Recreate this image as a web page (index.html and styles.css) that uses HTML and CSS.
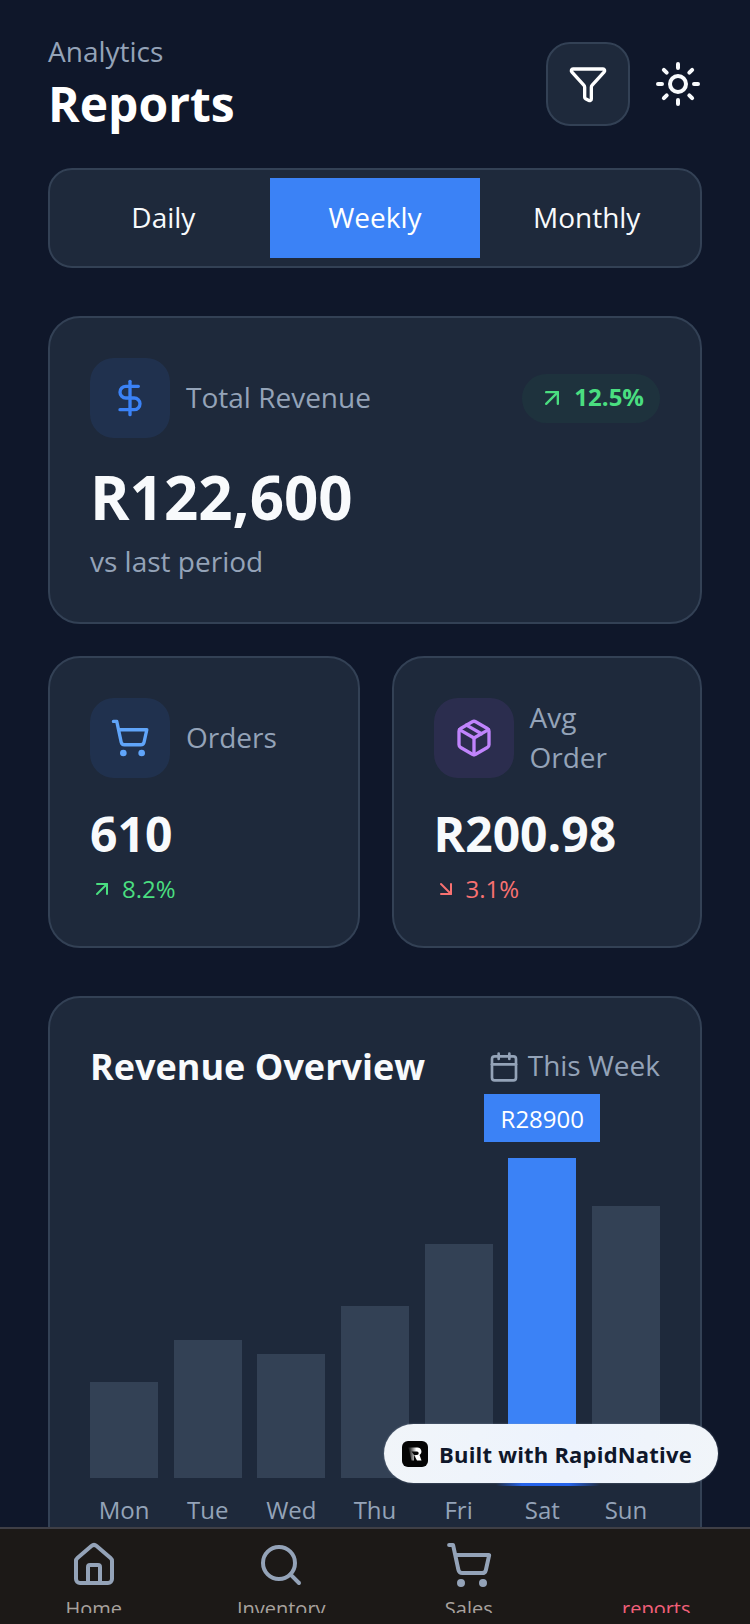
FILE: index.html
```html
<!DOCTYPE html>
<html lang="en">
<head>
<meta charset="utf-8">
<title>Reports</title>
<link rel="stylesheet" href="styles.css">
</head>
<body>
<div class="screen">
  <main class="content">
    <header class="header">
      <div class="titles">
        <div class="eyebrow">Analytics</div>
        <h1 class="title">Reports</h1>
      </div>
      <div class="actions">
        <button class="filter-btn">
          <svg class="ic ic-40" viewBox="0 0 24 24"><path d="M10 20a1 1 0 0 0 .553.895l2 1A1 1 0 0 0 14 21v-7a2 2 0 0 1 .517-1.341L21.74 4.67A1 1 0 0 0 21 3H3a1 1 0 0 0-.742 1.67l7.225 7.989A2 2 0 0 1 10 14z"/></svg>
        </button>
        <svg class="ic ic-48" viewBox="0 0 24 24"><circle cx="12" cy="12" r="4"/><path d="M12 2v2M12 20v2M4.93 4.93l1.41 1.41M17.66 17.66l1.41 1.41M2 12h2M20 12h2M6.34 17.66l-1.41 1.41M19.07 4.93l-1.41 1.41"/></svg>
      </div>
    </header>

    <div class="segments">
      <div class="segment">Daily</div>
      <div class="segment segment-active">Weekly</div>
      <div class="segment">Monthly</div>
    </div>

    <section class="card card-revenue">
      <div class="card-top">
        <div class="label-row">
          <div class="icon-box box-blue">
            <svg class="ic ic-40 blue" viewBox="0 0 24 24"><path d="M12 2v20"/><path d="M17 5H9.500a3.500 3.500 0 0 0 0 7h5a3.500 3.500 0 0 1 0 7H6"/></svg>
          </div>
          <div class="label">Total Revenue</div>
        </div>
        <div class="pill">
          <svg class="ic ic-28 green" viewBox="0 0 24 24"><path d="M7 7h10v10"/><path d="M7 17 17 7"/></svg>
          <span>12.5%</span>
        </div>
      </div>
      <div class="big-value">R122,600</div>
      <div class="sub">vs last period</div>
    </section>

    <div class="stats">
      <section class="card stat">
        <div class="label-row">
          <div class="icon-box box-blue2">
            <svg class="ic ic-40 sky" viewBox="0 0 24 24"><circle cx="8" cy="21" r="1"/><circle cx="19" cy="21" r="1"/><path d="M2.05 2.05h2l2.66 12.42a2 2 0 0 0 2 1.58h9.78a2 2 0 0 0 1.95-1.57l1.65-7.43H5.12"/></svg>
          </div>
          <div class="label">Orders</div>
        </div>
        <div class="mid-value">610</div>
        <div class="delta up">
          <svg class="ic ic-24" viewBox="0 0 24 24"><path d="M7 7h10v10"/><path d="M7 17 17 7"/></svg>
          <span>8.2%</span>
        </div>
      </section>
      <section class="card stat">
        <div class="label-row">
          <div class="icon-box box-purple">
            <svg class="ic ic-40 purple" viewBox="0 0 24 24"><path d="m7.500 4.270 9 5.150"/><path d="M21 8a2 2 0 0 0-1-1.730l-7-4a2 2 0 0 0-2 0l-7 4A2 2 0 0 0 3 8v8a2 2 0 0 0 1 1.730l7 4a2 2 0 0 0 2 0l7-4A2 2 0 0 0 21 16Z"/><path d="m3.300 7 8.700 5 8.700-5"/><path d="M12 22V12"/></svg>
          </div>
          <div class="label label-narrow">Avg Order</div>
        </div>
        <div class="mid-value">R200.98</div>
        <div class="delta down">
          <svg class="ic ic-24" viewBox="0 0 24 24"><path d="m7 7 10 10"/><path d="M17 7v10H7"/></svg>
          <span>3.1%</span>
        </div>
      </section>
    </div>

    <section class="card chart-card">
      <div class="chart-head">
        <h2 class="chart-title">Revenue Overview</h2>
        <div class="range">
          <svg class="ic ic-32" viewBox="0 0 24 24"><path d="M8 2v4"/><path d="M16 2v4"/><rect x="3" y="4" width="18" height="18" rx="2"/><path d="M3 10h18"/></svg>
          <span>This Week</span>
        </div>
      </div>
      <div class="chart">
        <div class="col"><div class="bar" style="height:96px"></div><div class="day">Mon</div></div>
        <div class="col"><div class="bar" style="height:138px"></div><div class="day">Tue</div></div>
        <div class="col"><div class="bar" style="height:124px"></div><div class="day">Wed</div></div>
        <div class="col"><div class="bar" style="height:172px"></div><div class="day">Thu</div></div>
        <div class="col"><div class="bar" style="height:234px"></div><div class="day">Fri</div></div>
        <div class="col">
          <div class="bar bar-active" style="height:320px"><div class="tip">R28900</div></div>
          <div class="day">Sat</div>
        </div>
        <div class="col"><div class="bar" style="height:272px"></div><div class="day">Sun</div></div>
      </div>
    </section>
  </main>

  <nav class="nav">
    <div class="nav-item">
      <svg class="ic ic-48" viewBox="0 0 24 24"><path d="M15 21v-8a1 1 0 0 0-1-1h-4a1 1 0 0 0-1 1v8"/><path d="M3 10a2 2 0 0 1 .709-1.528l7-5.999a2 2 0 0 1 2.582 0l7 5.999A2 2 0 0 1 21 10v9a2 2 0 0 1-2 2H5a2 2 0 0 1-2-2z"/></svg>
      <div class="nav-label">Home</div>
    </div>
    <div class="nav-item">
      <svg class="ic ic-48" viewBox="0 0 24 24"><circle cx="11" cy="11" r="8"/><path d="m21 21-4.300-4.300"/></svg>
      <div class="nav-label">Inventory</div>
    </div>
    <div class="nav-item">
      <svg class="ic ic-48" viewBox="0 0 24 24"><circle cx="8" cy="21" r="1"/><circle cx="19" cy="21" r="1"/><path d="M2.05 2.05h2l2.66 12.42a2 2 0 0 0 2 1.58h9.78a2 2 0 0 0 1.95-1.57l1.65-7.43H5.12"/></svg>
      <div class="nav-label">Sales</div>
    </div>
    <div class="nav-item">
      <div class="nav-spacer"></div>
      <div class="nav-label nav-label-active">reports</div>
    </div>
  </nav>

  <div class="built">
    <svg class="built-logo" viewBox="0 0 26 26">
      <defs>
        <linearGradient id="rapid-fade" x1="0.1" y1="0" x2="0.6" y2="0">
          <stop offset="0" stop-color="#2a2a2a"/>
          <stop offset="1" stop-color="#ffffff"/>
        </linearGradient>
      </defs>
      <rect width="26" height="26" rx="6" fill="#050505"/>
      <path d="M6.500 6.500H15.500a4 4 0 0 1 2 7.400L19.500 19.500H15L12 14H15a1.600 1.600 0 0 0 0-3.400H9.500L12 14V19.500H9.500Z" fill="url(#rapid-fade)"/>
    </svg>
    <span>Built with RapidNative</span>
  </div>
</div>
</body>
</html>
```
FILE: styles.css
```css
* { box-sizing: border-box; }
html, body { margin: 0; padding: 0; }
body {
  width: 750px;
  height: 1624px;
  overflow: hidden;
  background: #0f172a;
  font-family: "Open Sans", "Noto Sans", sans-serif;
  color: #f8fafc;
}
.screen {
  position: relative;
  width: 750px;
  height: 1624px;
  display: flex;
  flex-direction: column;
  overflow: hidden;
}
.content {
  flex: 1;
  min-height: 0;
  overflow: hidden;
  padding: 32px 48px 0;
  display: flex;
  flex-direction: column;
}
.ic {
  fill: none;
  stroke: currentColor;
  stroke-width: 2;
  stroke-linecap: round;
  stroke-linejoin: round;
  flex: none;
  display: block;
}
.ic-24 { width: 24px; height: 24px; }
.ic-28 { width: 28px; height: 28px; }
.ic-32 { width: 32px; height: 32px; }
.ic-40 { width: 40px; height: 40px; }
.ic-48 { width: 48px; height: 48px; }
.blue { color: #3b82f6; }
.sky { color: #60a5fa; }
.purple { color: #c084fc; }
.green { color: #4ade80; }

.header {
  display: flex;
  justify-content: space-between;
  align-items: center;
  height: 104px;
  flex: none;
}
.eyebrow {
  font-size: 28px;
  line-height: 38px;
  color: #94a3b8;
}
.title {
  margin: 2px 0 0;
  font-size: 48px;
  line-height: 64px;
  font-weight: 700;
  color: #fff;
}
.actions { display: flex; align-items: center; gap: 24px; }
.filter-btn {
  width: 84px;
  height: 84px;
  border-radius: 24px;
  background: #1e293b;
  border: 2px solid #334155;
  color: #fff;
  padding: 0;
  display: flex;
  align-items: center;
  justify-content: center;
}

.segments {
  flex: none;
  margin-top: 32px;
  height: 100px;
  padding: 8px;
  display: flex;
  gap: 1px;
  background: #1e293b;
  border: 2px solid #334155;
  border-radius: 24px;
}
.segment {
  flex: 1;
  display: flex;
  align-items: center;
  justify-content: center;
  padding-bottom: 2px;
  font-size: 28px;
  color: #f8fafc;
}
.segment-active { background: #3b82f6; color: #fff; }

.card {
  background: #1e293b;
  border: 2px solid #334155;
  border-radius: 32px;
  padding: 40px;
  flex: none;
}
.card-revenue { margin-top: 48px; height: 308px; }
.card-top {
  display: flex;
  justify-content: space-between;
  align-items: center;
}
.label-row { display: flex; align-items: center; gap: 16px; }
.icon-box {
  width: 80px;
  height: 80px;
  border-radius: 24px;
  display: flex;
  align-items: center;
  justify-content: center;
  flex: none;
}
.box-blue { background: rgba(59, 130, 246, 0.1); }
.box-blue2 { background: rgba(59, 130, 246, 0.1); }
.box-purple { background: rgba(168, 85, 247, 0.1); }
.label { margin-top: -2px; font-size: 28px; line-height: 40px; color: #94a3b8; }
.label-narrow { width: 100px; }
.pill {
  display: flex;
  align-items: center;
  gap: 8px;
  height: 49px;
  padding: 0 16px;
  border-radius: 25px;
  background: rgba(34, 197, 94, 0.06);
  color: #4ade80;
  font-size: 24px;
  font-weight: 700;
}
.pill span { margin-bottom: 3px; }
.big-value {
  margin-top: 18px;
  font-size: 60px;
  line-height: 82px;
  font-weight: 700;
  color: #f8fafc;
}
.sub { margin-top: 3px; font-size: 28px; line-height: 40px; color: #94a3b8; }

.stats {
  flex: none;
  margin-top: 32px;
  display: grid;
  grid-template-columns: 311.5fr 310.5fr;
  column-gap: 32px;
}
.stat { height: 292px; min-width: 0; }
.mid-value {
  margin-top: 24px;
  font-size: 48px;
  line-height: 64px;
  font-weight: 700;
  color: #f8fafc;
}
.delta {
  margin-top: 7px;
  display: flex;
  align-items: center;
  gap: 8px;
  font-size: 24px;
  line-height: 32px;
}
.up { color: #4ade80; }
.down { color: #f87171; }

.chart-card { margin-top: 48px; height: 640px; }
.chart-head {
  margin-top: 3px;
  display: flex;
  justify-content: space-between;
  align-items: center;
}
.chart-title {
  margin: 0;
  font-size: 36px;
  line-height: 52px;
  font-weight: 700;
  color: #f8fafc;
}
.range {
  display: flex;
  align-items: center;
  gap: 8px;
  font-size: 28px;
  color: #94a3b8;
}
.range span { margin-bottom: 4px; }
.chart {
  height: 435px;
  display: flex;
  align-items: flex-end;
  justify-content: space-between;
}
.col {
  width: 68px;
  display: flex;
  flex-direction: column;
  align-items: stretch;
}
.bar { background: #334155; position: relative; }
.bar-active { background: #3b82f6; }
.tip {
  position: absolute;
  left: 50%;
  top: -64px;
  transform: translateX(-50%);
  width: 116px;
  height: 48px;
  display: flex;
  align-items: center;
  justify-content: center;
  background: #3b82f6;
  color: #fff;
  font-size: 24px;
}
.day {
  margin-top: 14px;
  height: 36px;
  line-height: 36px;
  font-size: 24px;
  text-align: center;
  color: #94a3b8;
}

.nav {
  flex: none;
  height: 97px;
  padding-bottom: 11px;
  background: #1c1917;
  border-top: 2px solid #3f3f46;
  display: flex;
}
.nav-item {
  flex: 1;
  min-width: 0;
  overflow: hidden;
  padding-top: 12px;
  display: flex;
  flex-direction: column;
  align-items: center;
  color: #94a3b8;
}
.nav-spacer { height: 48px; flex: none; }
.nav-label {
  margin-top: 6px;
  font-size: 20px;
  line-height: 28px;
  color: #a8a29e;
}
.nav-label-active { color: #f2607a; }

.built {
  position: absolute;
  left: 384px;
  top: 1424px;
  width: 334px;
  height: 59px;
  display: flex;
  align-items: center;
  gap: 11px;
  padding-left: 18px;
  border-radius: 30px;
  background: linear-gradient(100deg, #f1f5f9 0%, #edf3fd 55%, #f1f5f9 100%);
  box-shadow: 0 0 2px rgba(148, 163, 184, 0.6);
  color: #0f172a;
  font-size: 22px;
  font-weight: 700;
  letter-spacing: 0.2px;
}
.built::after {
  content: "";
  position: absolute;
  left: 112px;
  top: 100%;
  width: 104px;
  height: 3px;
  background: linear-gradient(90deg, rgba(37, 99, 235, 0), #2563eb 25%, #2563eb 70%, rgba(37, 99, 235, 0));
}
.built-logo { width: 26px; height: 26px; flex: none; }
```
